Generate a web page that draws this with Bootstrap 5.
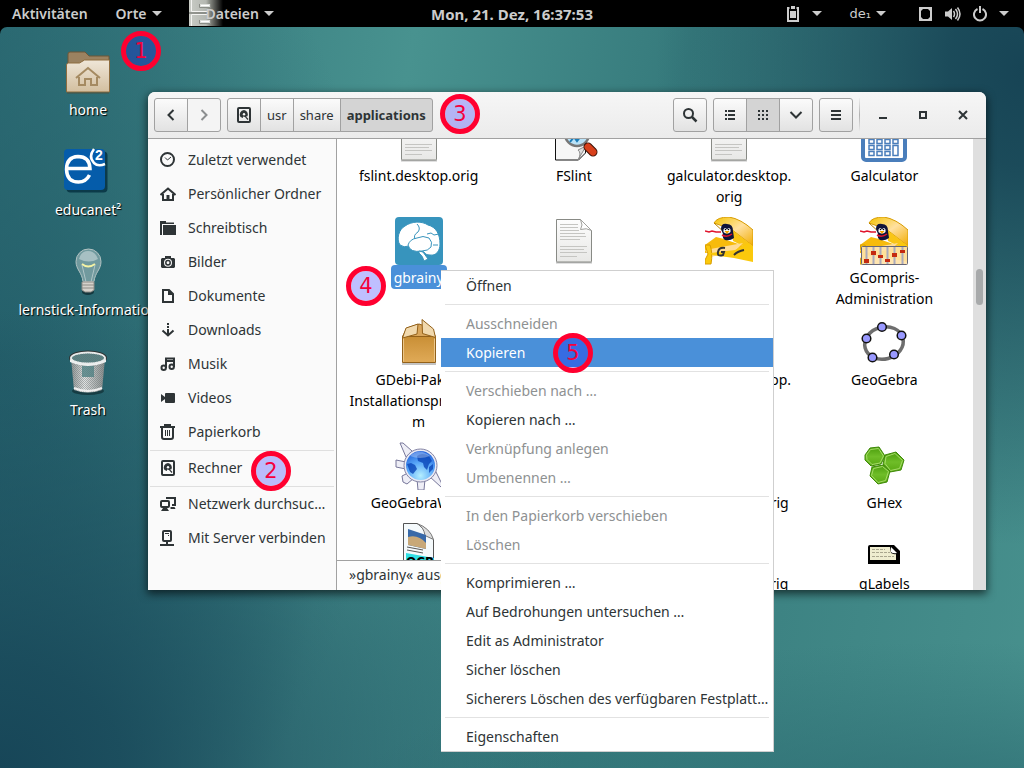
<!DOCTYPE html>
<html lang="de">
<head>
<meta charset="utf-8">
<meta name="viewport" content="width=device-width, initial-scale=1">
<title>Dateien – applications</title>
<link href="https://cdn.jsdelivr.net/npm/bootstrap@5.3.0/dist/css/bootstrap.min.css" rel="stylesheet">
<style>
  :root { --ink: #2e3436; --edge: #a1a1a1; --sel: #4a90d9; }
  body { font-family: "Noto Sans", sans-serif; font-size: 14px; line-height: 20px; color: var(--ink); background: #000; }
  a, button { color: inherit; text-decoration: none; }
  svg { display: block; flex: none; }

  /* top panel */
  .panel { height: 27px; padding: 0 15px 0 12px; color: #ccc; font-weight: 600; }
  .panel button { background: none; border: 0; padding: 0; font-weight: 600; color: inherit; }
  .panel time { font-size: 15px; font-weight: 700; }
  .tri { width: 0; height: 0; border: 5px solid transparent; border-top-color: currentColor; border-bottom: 0; }
  .with-tri { display: flex; align-items: center; gap: 5px; }
  .places { margin-left: 28px; }
  .app-btn { position: relative; margin-left: 44px; }
  .cabinet { position: absolute; left: -17px; top: -4px; }
  .app-btn span { position: relative; }
  .tray { gap: 28px; }
  .tray .with-tri { gap: 12px; }
  .tray .keymap { gap: 5px; margin-right: 4px; }
  .keymap span { font-family: "DejaVu Sans", sans-serif; font-size: 13px; font-weight: 400; }

  /* desktop */
  .desk {
    border-radius: 7px 7px 0 0;
    background:
      radial-gradient(ellipse 36% 64% at 100% 6%, #174455 0, rgba(23,68,85,.9) 20%, rgba(23,68,85,0) 100%),
      radial-gradient(ellipse 55% 62% at 0 100%, #174658 0, rgba(23,70,88,.85) 22%, rgba(23,70,88,0) 100%),
      radial-gradient(ellipse 38% 75% at 0 45%, rgba(34,92,104,.85) 0, rgba(34,92,104,0) 100%),
      radial-gradient(ellipse 60% 25% at 92% 108%, rgba(44,108,114,.9) 0, rgba(44,108,114,0) 100%),
      linear-gradient(100deg, #2f7077 0, #48928f 36%, #367a7c 60%, #47908d 100%);
  }
  .shortcuts { width: 176px; padding-top: 21px; color: #fff; text-shadow: 1px 1px 1px #000; }
  .shortcuts a { height: 100px; gap: 4px; white-space: nowrap; }

  /* file manager window */
  .win { position: absolute; left: 148px; right: 38px; top: 65px; bottom: 178px; border-radius: 7px 7px 0 0;
         box-shadow: 0 3px 9px 1px rgba(0,0,0,.6); background: #fff; }
  .bar { height: 47px; padding: 0 3px 0 6px; background: linear-gradient(#f6f6f6, #ebebeb); border-bottom: 1px solid var(--edge); border-radius: 7px 7px 0 0; }
  .bar-set { gap: 6px; }
  .bar .btn { height: 34px; padding: 0; font-size: 13px; line-height: 20px; color: var(--ink); border: 1px solid var(--edge); border-radius: 3px;
         background: linear-gradient(#fbfbfb, #e2e2e2); display: flex; align-items: center; justify-content: center; flex: none; }
  .bar .btn.sq { width: 34px; }
  .bar .btn.txt { padding: 0 6px; }
  .bar .btn.on { background: #d4d4d4; }
  .bar .btn.off { color: #8b8e8f; background: #f4f4f4; }
  .bar .btn.plain { background: none; border: 0; width: 40px; }
  .bar .divider { width: 1px; height: 34px; margin-right: -3px; background: linear-gradient(#eee, #b0b0b0, #eee); }
  .side { width: 189px; padding-top: 4px; background: #fafafa; border-right: 1px solid var(--edge); flex: none; }
  .side a { height: 34px; padding-left: 12px; gap: 12px; white-space: nowrap; }
  .side hr, .menu-box hr { margin: 0; border: 0; opacity: 1; }
  .side hr { height: 2px; margin: 0 2px; background: linear-gradient(transparent 50%, #dfdfdf 50%); }
  .files { display: grid; grid-template-columns: repeat(4, 1fr); margin-top: -24px; padding: 0 11px 0 4px; line-height: 21px; color: #000; }
  .files a { display: flex; flex-direction: column; align-items: center; gap: 2px; padding-bottom: 10px; text-align: center; white-space: nowrap; }
  .files a.picked span { margin: -2px 0 0; padding: 2px 3px 1px; border-radius: 4px; background: var(--sel); color: #fff; }
  .trough { width: 13px; background: #dfdfdf; padding-top: 130px; flex: none; }
  .thumb { width: 7px; height: 36px; margin-left: 3px; border-radius: 4px; background: #a8aaab; }
  .note { position: absolute; left: 0; bottom: 0; width: 260px; height: 30px; padding: 0 0 2px 12px; background: #fdfdfd; border: 1px solid var(--edge); border-width: 1px 1px 0 0; }

  /* context menu */
  .menu-box { position: absolute; left: 441px; top: 243px; width: 333px; background: #fff; border: 1px solid #cfcfcf; border-width: 1px 1px 1px 0; z-index: 5; }
  .menu-box button { display: block; width: 100%; height: 29px; padding: 0 0 0 25px; border: 0; background: none; text-align: left; white-space: nowrap; line-height: 20px; }
  .menu-box button:disabled { color: #8e9192; }
  .menu-box button.hot { background: var(--sel); color: #fff; }
  .menu-box hr { height: 9px; margin: 0 4px; background: linear-gradient(#e2e2e2, #e2e2e2) 0 4px / 100% 1px no-repeat; }

  /* numbered step markers */
  .step { position: absolute; z-index: 6; width: 40px; height: 40px; border: 5px solid #ff0030; border-radius: 50%; background: rgba(0,0,255,.25);
          background-clip: padding-box; color: #f5003c; font: 21px/30px "DejaVu Sans", sans-serif; text-align: center; }
  .s1 { left: 121px; top: 4px; } .s2 { left: 251px; top: 424px; } .s3 { left: 440px; top: 67px; }
  .s4 { left: 346px; top: 239px; } .s5 { left: 553px; top: 306px; }
</style>
</head>
<body class="vh-100 d-flex flex-column overflow-hidden">

<svg width="0" height="0" class="position-absolute" aria-hidden="true">
  <defs>
    <linearGradient id="paper" x2="0" y2="1"><stop stop-color="#fdfdfd"/><stop offset="1" stop-color="#e8e8e6"/></linearGradient>
    <linearGradient id="tan" x2="0" y2="1"><stop stop-color="#efe6d8"/><stop offset="1" stop-color="#d3bf9f"/></linearGradient>
    <linearGradient id="boxg" x2="0" y2="1"><stop stop-color="#c98f36"/><stop offset="1" stop-color="#e0aa57"/></linearGradient>
    <linearGradient id="metal" x2="1" y2="0"><stop stop-color="#8e9494"/><stop offset=".4" stop-color="#e2e4e4"/><stop offset="1" stop-color="#858b8b"/></linearGradient>
    <linearGradient id="wing" x2="1" y2="1"><stop stop-color="#f5c400"/><stop offset=".5" stop-color="#ffe0a0"/><stop offset="1" stop-color="#f2ac00"/></linearGradient>
    <linearGradient id="fade"><stop stop-color="#c9ccc6"/><stop offset=".5" stop-color="#b4b7b1"/><stop offset=".6" stop-color="#8c8f88"/><stop offset="1" stop-color="#000"/></linearGradient>
    <radialGradient id="globe" cx=".5" cy=".85" r=".9"><stop stop-color="#b5efff"/><stop offset=".5" stop-color="#5aa8f8"/><stop offset="1" stop-color="#1a5ad8"/></radialGradient>
    <linearGradient id="hexg" x2="0" y2="1"><stop stop-color="#4a9d0c"/><stop offset=".5" stop-color="#6fbd28"/><stop offset="1" stop-color="#58a812"/></linearGradient>
    <pattern id="mesh" width="2" height="2" patternUnits="userSpaceOnUse"><path d="M0 0h1v1H0zM1 1h1v1H1z" fill="#676f6f"/></pattern>
    <symbol id="doc" viewBox="0 0 48 48">
      <path d="M6 45.500h36" stroke="#999" stroke-width="2" opacity=".6"/>
      <path d="M6.500 2.500h24l11 11v30.500a1 1 0 0 1-1 1h-33a1 1 0 0 1-1-1z" fill="url(#paper)" stroke="#888a85"/>
      <path d="M30.500 2.500q3 6 0 10 6-2 11 1z" fill="#fff" stroke="#a0a09c"/>
      <path d="M10 7.500h18M10 10.500h18M10 13.500h19M10 16.500h25M10 19.500h26M10 22.500h20M10 29.500h27M10 32.500h24M10 35.500h27M10 39.500h17" stroke="#c5c5c2"/>
    </symbol>
    <symbol id="disk" viewBox="0 0 16 16">
      <rect x="2" y="1" width="12" height="14" rx="1" fill="none" stroke="currentColor" stroke-width="2"/>
      <path d="M8 3a4.500 4.500 0 0 0-3.500 7L7 11V9.500l2 .5 2.500 3 1-1L10 9.500l1.500-.3A4.500 4.500 0 0 0 8 3z" fill="currentColor"/>
      <circle cx="8" cy="7.300" r="1.200" fill="#fafafa"/>
    </symbol>
    <symbol id="plane" viewBox="0 0 48 48">
      <path d="M9 6Q12 0 24 0Q36 2 48 13v16L26 12z" fill="url(#wing)" stroke="#d89c00"/>
      <path d="M26 12l22 17v5L28 24z" fill="#f9c515"/>
      <path d="M9 6l11 10" stroke="#b98400"/>
      <path d="M11 20l8 2 20 7-10 5-29 2V28z" fill="#f7bb0c"/>
      <path d="M0 33l38-7-8 8-24 6z" fill="#ffdc96"/>
      <path d="M0 28h5q3 8 1 19H0v-4l3-6z" fill="#fbc90c" stroke="#d89c00"/>
      <path d="M6 36l24-3 13-7 5 4v15l-19-4-22-3z" fill="#fbc90c"/>
      <path d="M16 12q0-6 6-5 6 0 6 7l1 7q-4 3-9 2-3-2-2-6z" fill="#10143a"/>
      <path d="M18.500 12.500q1.500-3 3.500 0 2-3 3.500 0v2.500q-3.500 3-7 0z" fill="#fff"/><path d="M19.500 14h5l-2.500 3z" fill="#f6a400"/>
      <circle cx="20.500" cy="12.500" r=".8"/><circle cx="23.500" cy="12.500" r=".8"/>
      <path d="M0 14l4 1 3-1 4 1 5 0M17 18q5 3 10-1" fill="none" stroke="#e0142c" stroke-width="1.500"/>
    </symbol>
  </defs>
</svg>

<header class="panel d-flex align-items-center justify-content-between flex-shrink-0 position-relative">
  <div class="d-flex">
    <button>Aktivitäten</button>
    <button class="with-tri places">Orte <i class="tri"></i></button>
    <button class="with-tri app-btn">
      <svg class="cabinet" width="34" height="27" viewBox="0 0 34 27">
        <path d="M0 0h34v26H0z" fill="url(#fade)"/><path d="M2.500 0v11.500h16M2.500 26V14.500h16" fill="none" stroke="#f4f4f2"/><path d="M0 13h19" stroke="#60635d"/><path d="M10.500 4v3.500h11V4M10.500 20v3.500h11V20" fill="#dcdedb" stroke="#8a8d87"/><path d="M12 5.500h8M12 21.500h8" stroke="#fff"/></svg>
      <span>Dateien</span> <i class="tri"></i></button>
  </div>
  <time class="position-absolute start-50 translate-middle-x">Mon, 21. Dez, 16:37:53</time>
  <div class="tray d-flex align-items-center">
    <button class="with-tri" aria-label="Zwischenablage"><svg width="14" height="16" viewBox="0 0 14 16"><path d="M5 0h4v3H5z" fill="currentColor"/><path d="M3.500 2H2v13h10V2h-1.500" fill="none" stroke="currentColor" stroke-width="2"/><path d="M4 5h6v7H4z" fill="currentColor"/></svg><i class="tri"></i></button>
    <button class="with-tri keymap"><span>de₁</span><i class="tri"></i></button>
    <button class="with-tri" aria-label="System">
      <svg width="14" height="14" viewBox="0 0 14 14"><rect x="2" y="1" width="11" height="12" fill="none" stroke="currentColor" stroke-width="2"/><path d="M3 2h2L3 4zM12 2h-2l2 2zM3 12v-2l2 2zM12 12v-2l-2 2z" fill="currentColor"/></svg>
      <svg width="17" height="16" viewBox="0 0 17 16"><path d="M1 5.500h3L8 2v12l-4-3.500H1z" fill="currentColor"/><path d="M9.500 5q2 3 0 6M11.500 3q4 5 0 10M13.500 1.500q5 6.500 0 13" fill="none" stroke="currentColor" stroke-width="1.500"/></svg>
      <svg width="14" height="16" viewBox="0 0 14 16"><path d="M4.500 3A6 6 0 1 0 9.500 3M7 0v7" fill="none" stroke="currentColor" stroke-width="2"/></svg>
      <i class="tri"></i></button>
  </div>
</header>

<main class="desk flex-grow-1 position-relative">
  <nav class="shortcuts d-flex flex-column" aria-label="Schreibtisch">
    <a href="#" class="d-flex flex-column align-items-center">
      <svg width="48" height="48" viewBox="0 0 48 48"><path d="M4 43V6q0-2 2-2h15l4 4h20v8H4z" fill="#9b8260" stroke="#6f5636"/><path d="M2.500 44V17q0-2 2-2h11l5-3h25v32z" fill="url(#tan)" stroke="#8d6c3f"/><path d="M3 45h42" stroke="#5b4426" opacity=".6"/><path d="M12 30l12-10 12 10M15 29v8h6v-6h6v6h6v-8" fill="none" stroke="#a58a61" stroke-width="2"/></svg>home</a>
    <a href="#" class="d-flex flex-column align-items-center">
      <svg width="48" height="48" viewBox="0 0 48 48"><rect x="2.500" y="3.500" width="41" height="41" rx="4" fill="#022b3c" opacity=".75"/><rect x="0" y="1" width="41" height="41" rx="4" fill="#055caa"/><path d="M2 20.500h24Q25.500 8.500 14 8.500Q2.500 9 2.500 21.500Q3 34 14.500 34Q22 34 25.500 27" fill="none" stroke="#fff" stroke-width="3.500"/><path d="M30 1q-6 8 0 14 4 4 11 1" fill="none" stroke="#fff" stroke-width="2.500"/><text x="31" y="12" font-family="Liberation Sans, sans-serif" font-weight="700" font-size="14" fill="#fff" style="text-shadow:none">2</text></svg>educanet²</a>
    <a href="#" class="d-flex flex-column align-items-center">
      <svg width="48" height="48" viewBox="0 0 48 48"><ellipse cx="24" cy="44" rx="6" ry="3" fill="#0b2429" opacity=".7"/><path d="M12 13.500a12.500 12.500 0 0 1 25 0c0 8-6 11-7 20H19c-1-9-7-12-7-20z" fill="#b8cccc" fill-opacity=".5" stroke="#b4c4c4"/><path d="M15 11q2-8 9-8t10 8q-9 5-19 0z" fill="#e9f0f0" opacity=".45"/><path d="M18 16q6 5 13 0" fill="none" stroke="#f4f3a4" stroke-width="2"/><path d="M18 17l4 17M31 17l-4 17" stroke="#d8e2e2" opacity=".6"/><path d="M18 34h12v8l-3 2h-6l-3-2z" fill="#d5d2cb" stroke="#8e8c86"/><path d="M18 37h12M18 40h12" stroke="#8e8c86"/></svg>lernstick-Information</a>
    <a href="#" class="d-flex flex-column align-items-center">
      <svg width="48" height="48" viewBox="0 0 48 48"><ellipse cx="24" cy="43" rx="16" ry="4" fill="#0c2529" opacity=".6"/><path d="M7 10h34l-3 32q-14 5-28 0z" fill="url(#metal)"/><path d="M7 10h34l-3 32q-14 5-28 0z" fill="url(#mesh)" opacity=".45"/><path d="M18 17h12v12H18z" fill="#4f7f82" opacity=".8"/><path d="M10 40q14 6 28 0" fill="none" stroke="#eee" stroke-width="2"/><ellipse cx="24" cy="10" rx="17.500" ry="6" fill="#3b7073" stroke="#303535" stroke-width="3"/><ellipse cx="24" cy="10" rx="17" ry="5.500" fill="#568688" stroke="#e8eaea" stroke-width="2"/><ellipse cx="24" cy="10" rx="16" ry="4.500" fill="url(#mesh)" opacity=".6"/><path d="M6 11q18 10 36 0v3q-18 8-36 0z" fill="#eceeee"/></svg>Trash</a>
  </nav>

  <section class="win d-flex flex-column" aria-label="applications">
    <div class="bar d-flex align-items-center justify-content-between flex-shrink-0">
      <div class="bar-set d-flex">
        <div class="btn-group">
          <button class="btn sq" aria-label="Zurück"><svg width="16" height="16" viewBox="0 0 16 16"><path d="M10.500 3L5.500 8l5 5" fill="none" stroke="currentColor" stroke-width="2"/></svg></button>
          <button class="btn sq off" aria-label="Vorwärts"><svg width="16" height="16" viewBox="0 0 16 16"><path d="M5.500 3l5 5-5 5" fill="none" stroke="currentColor" stroke-width="2"/></svg></button>
        </div>
        <div class="btn-group">
          <button class="btn sq" aria-label="Rechner"><svg width="16" height="16"><use href="#disk"/></svg></button>
          <button class="btn txt">usr</button>
          <button class="btn txt">share</button>
          <button class="btn txt on fw-bold">applications</button>
        </div>
      </div>
      <div class="bar-set d-flex">
        <button class="btn sq" aria-label="Suchen"><svg width="16" height="16" viewBox="0 0 16 16"><circle cx="6.500" cy="6.500" r="4.500" fill="none" stroke="currentColor" stroke-width="2"/><path d="M10 10l4.500 4.500" stroke="currentColor" stroke-width="2.500"/></svg></button>
        <div class="btn-group">
          <button class="btn sq" aria-label="Liste"><svg width="16" height="16" viewBox="0 0 16 16"><path d="M3 4h2M3 8h2M3 12h2M6 4h7M6 8h7M6 12h7" stroke="currentColor" stroke-width="2"/></svg></button>
          <button class="btn sq on" aria-label="Symbole"><svg width="16" height="16" viewBox="0 0 16 16"><path d="M3 4h10M3 8h10M3 12h10" stroke="currentColor" stroke-width="2" stroke-dasharray="2 2"/></svg></button>
          <button class="btn sq" aria-label="Ansicht"><svg width="16" height="16" viewBox="0 0 16 16"><path d="M2.500 5L8 10.500 13.500 5" fill="none" stroke="currentColor" stroke-width="2"/></svg></button>
        </div>
        <button class="btn sq" aria-label="Menü"><svg width="16" height="16" viewBox="0 0 16 16"><path d="M3 4h10M3 8h10M3 12h10" stroke="currentColor" stroke-width="2"/></svg></button>
        <div class="divider"></div>
        <div class="d-flex">
          <button class="btn plain" aria-label="Minimieren"><svg width="16" height="16" viewBox="0 0 16 16"><path d="M4 11h8" stroke="currentColor" stroke-width="2"/></svg></button>
          <button class="btn plain" aria-label="Maximieren"><svg width="16" height="16" viewBox="0 0 16 16"><path d="M5 5h6v6H5z" fill="none" stroke="currentColor" stroke-width="2"/></svg></button>
          <button class="btn plain" aria-label="Schließen"><svg width="16" height="16" viewBox="0 0 16 16"><path d="M4 4l8 8M12 4l-8 8" stroke="currentColor" stroke-width="2"/></svg></button>
        </div>
      </div>
    </div>

    <div class="d-flex flex-grow-1 overflow-hidden">
      <nav class="side" aria-label="Orte">
        <a href="#" class="d-flex align-items-center"><svg width="16" height="16" viewBox="0 0 16 16"><circle cx="7.500" cy="7.500" r="6.500" fill="none" stroke="currentColor" stroke-width="2"/><path d="M5 5.500l2.500 2.500L11 5" fill="none" stroke="currentColor"/></svg>Zuletzt verwendet</a>
        <a href="#" class="d-flex align-items-center"><svg width="16" height="16" viewBox="0 0 16 16"><path d="M.5 9L8 2.500 15.500 9M3 8v6h10V8" fill="none" stroke="currentColor" stroke-width="2"/><path d="M6.500 9h3v5h-3z" fill="currentColor"/></svg>Persönlicher Ordner</a>
        <a href="#" class="d-flex align-items-center"><svg width="16" height="16" viewBox="0 0 16 16"><path d="M0 1h6v1.500h8V4H2v11H0z" fill="currentColor"/><path d="M3 5h13v10H3z" fill="currentColor"/></svg>Schreibtisch</a>
        <a href="#" class="d-flex align-items-center"><svg width="16" height="16" viewBox="0 0 16 16"><path fill-rule="evenodd" d="M5 2h6v2h3l1 1v8l-1 1H2l-1-1V5l1-1h3zM8 4.800a4 4 0 1 0 0 8 4 4 0 0 0 0-8z" fill="currentColor"/><circle cx="8" cy="8.800" r="2.200" fill="none" stroke="currentColor" stroke-width="1.500"/></svg>Bilder</a>
        <a href="#" class="d-flex align-items-center"><svg width="16" height="16" viewBox="0 0 16 16"><path d="M3 2h6l4 4v8H3z" fill="none" stroke="currentColor" stroke-width="2"/><path d="M9 2l4 4v1H8V2z" fill="currentColor"/></svg>Dokumente</a>
        <a href="#" class="d-flex align-items-center"><svg width="16" height="16" viewBox="0 0 16 16"><path d="M7 1h2v2H7zM7 4h2v2H7zM7 7h2v5H7z" fill="currentColor"/><path d="M2.500 8.500L8 13.500l5.500-5" fill="none" stroke="currentColor" stroke-width="2"/></svg>Downloads</a>
        <a href="#" class="d-flex align-items-center"><svg width="16" height="16" viewBox="0 0 16 16"><path d="M6 12V2.500h8V11M6 5h8" fill="none" stroke="currentColor" stroke-width="2"/><circle cx="3.700" cy="11.700" r="2.200" fill="none" stroke="currentColor" stroke-width="2"/><circle cx="11.700" cy="10.700" r="2.200" fill="none" stroke="currentColor" stroke-width="2"/></svg>Musik</a>
        <a href="#" class="d-flex align-items-center"><svg width="16" height="16" viewBox="0 0 16 16"><path d="M1 4l4 3v2l-4 3zM6 3h8q1 0 1 1v8q0 1-1 1H6q-1 0-1-1V4q0-1 1-1z" fill="currentColor"/></svg>Videos</a>
        <a href="#" class="d-flex align-items-center"><svg width="16" height="16" viewBox="0 0 16 16"><path d="M0 3h15M4 1h7M2 4v9q0 2 2 2h7q2 0 2-2V4" fill="none" stroke="currentColor" stroke-width="2"/><path d="M5.500 6v6M7.500 6v6M9.500 6v6" stroke="currentColor"/></svg>Papierkorb</a>
        <hr>
        <a href="#" class="d-flex align-items-center"><svg width="16" height="16"><use href="#disk"/></svg>Rechner</a>
        <hr>
        <a href="#" class="d-flex align-items-center"><svg width="16" height="16" viewBox="0 0 16 16"><path d="M7 3V2h8v7h-3" fill="none" stroke="currentColor" stroke-width="2"/><rect x="1" y="5" width="8" height="6" rx="1" fill="none" stroke="currentColor" stroke-width="2"/><path d="M3 12h4l2 3H1zM10.500 11h4l1 2h-5z" fill="currentColor"/></svg>Netzwerk durchsuc…</a>
        <a href="#" class="d-flex align-items-center"><svg width="16" height="16" viewBox="0 0 16 16"><rect x="3" y="1" width="8" height="10" rx="1" fill="none" stroke="currentColor" stroke-width="2"/><path d="M7 11v3M0 15h14" stroke="currentColor" stroke-width="2"/><path d="M5 3.500h4M8 5.500h1" stroke="currentColor"/></svg>Mit Server verbinden</a>
      </nav>

      <div class="flex-grow-1 position-relative overflow-hidden">
        <div class="files">
          <a href="#"><svg width="48" height="48"><use href="#doc"/></svg><span>fslint.desktop.orig</span></a>
          <a href="#"><svg width="48" height="48" viewBox="0 0 48 48"><path d="M5.500 1v44h23l7-7V1z" fill="#f6f6f6" stroke="#111"/><path d="M28 45q4-7 0-10l8-4z" fill="#ddd" stroke="#888"/><circle cx="27" cy="19" r="12" fill="#b9e2f8" stroke="#777" stroke-width="2.500"/><path d="M20 27l4-5 3 4 4-5" stroke="#1b7cb8" stroke-width="2" fill="none"/><path d="M35 29l3 3" stroke="#333" stroke-width="4"/><path d="M38 32l5 5" stroke="#3a1107" stroke-width="9" stroke-linecap="round"/><path d="M38 32l5 5" stroke="#d8401b" stroke-width="7" stroke-linecap="round"/></svg><span>FSlint</span></a>
          <a href="#"><svg width="48" height="48"><use href="#doc"/></svg><span>galculator.desktop.<br>orig</span></a>
          <a href="#"><svg width="48" height="48" viewBox="0 0 48 48"><rect x="3" y="2" width="42" height="43" rx="3" fill="#fff" stroke="#4a7ebb" stroke-width="4"/><path d="M9 17h5v5H9zM17 17h5v5h-5zM25 17h5v5h-5zM33 17h5v5h-5zM9 24.500h5v4H9zM17 24.500h5v4h-5zM25 24.500h5v4h-5zM33 24.500h5v4h-5zM9 30.500h5v4H9zM17 30.500h5v4h-5zM25 30.500h5v4h-5zM33 30.500h5v10h-5zM9 36.500h5v4H9zM17 36.500h5v4h-5zM25 36.500h5v4h-5z" fill="none" stroke="#4a7ebb" stroke-width="1.500"/></svg><span>Galculator</span></a>

          <a href="#" class="picked"><svg width="48" height="48" viewBox="0 0 48 48"><rect width="48" height="48" rx="4" fill="#3794bd"/><g fill="#fff" stroke="#3794bd"><path d="M5 28C1 22 4 12 10 9c7-5 17-5 23-1 8 2 12 9 12 19 0 7-4 12-10 11-3 0-5-1-6-3L14 29q-5 2-9-1z"/><path d="M13 28q2-6 9-7 6-3 12 0 4 4 2 9-3 4-9 4-12 2-14-6z"/><path d="M20 22q-2-4 3-7 3-4-1-8M32 17l4-1 3 2 5-1M38 28h5" fill="none"/><path d="M24 34l4 1 5 7-4 2q-1-5-5-8z"/></g></svg><span>gbrainy</span></a>
          <a href="#"><svg width="48" height="48"><use href="#doc"/></svg><span>gbrainy.desktop.orig</span></a>
          <a href="#"><svg width="48" height="48" viewBox="0 0 48 48"><use href="#plane"/><path d="M20 31q-6-1-7 4t5 3l1-3h-3M29 38q4-4 10-5" fill="none" stroke="#333" stroke-width="2"/></svg><span>GCompris</span></a>
          <a href="#"><svg width="48" height="48" viewBox="0 0 48 48"><use href="#plane"/><rect x="1.500" y="29.500" width="46" height="18" rx="1" fill="#ffe2a8" fill-opacity=".9" stroke="#667"/><path d="M6.500 30v17M13.500 30v17M20.500 30v17M27.500 30v17M34.500 30v17M42.500 30v17" stroke="#aab" stroke-width="2"/><path d="M4 42h5v4H4zM11 34h5v4h-5zM18 38h5v3h-5zM25 42h5v3h-5zM32 36h5v4h-5zM40 33h5v3h-5z" fill="#c42a10"/></svg><span>GCompris-<br>Administration</span></a>

          <a href="#"><svg width="48" height="48" viewBox="0 0 48 48"><path d="M7 45h34" stroke="#888" stroke-width="2" opacity=".5"/><path d="M7.500 17.500L12 9l12-4 12 4 4.500 8.500z" fill="#d9a65c" stroke="#93611a"/><path d="M7.500 17.500h33v26h-33z" fill="url(#boxg)" stroke="#93611a"/><path d="M7.500 19L11 9l12-4-1 10zM27 .500L38.500 10l2 8.500-13-4z" fill="#f1d9ae" stroke="#93611a"/><path d="M8.500 42.500v-23M39.500 42.500v-23" fill="none" stroke="#ecc78a"/></svg><span>GDebi-Paket-<br>Installationsprogram<br>m</span></a>
          <a href="#"><svg width="48" height="48"><use href="#doc"/></svg><span>gdebi.desktop.orig</span></a>
          <a href="#"><svg width="48" height="48"><use href="#doc"/></svg><span>geogebra.desktop.<br>orig</span></a>
          <a href="#"><svg width="48" height="48" viewBox="0 0 48 48"><ellipse cx="24" cy="24" rx="19.500" ry="16" transform="rotate(-15 24 24)" fill="none" stroke="#6e6e6e" stroke-width="3.500"/><g fill="#9999ff" stroke="#111" stroke-width="1.500"><circle cx="22" cy="8" r="4.300"/><circle cx="41.500" cy="16.500" r="4.300"/><circle cx="34" cy="35.500" r="4.300"/><circle cx="12.500" cy="38.500" r="4.300"/><circle cx="6.500" cy="19.500" r="4.300"/></g></svg><span>GeoGebra</span></a>

          <a href="#"><svg width="48" height="48" viewBox="0 0 48 48"><g fill="#eeeef6" stroke="#77779a"><path d="M5 1l3 0 9 8-6 6zM1 18l10 2v7L1 25zM7 34l8-4 4 6-7 6-4-2zM22 37h8l-1 11h-6zM34 34l6-6 7 14-1 3z"/></g><circle cx="25.500" cy="23.500" r="16.500" fill="#eaeaf4" stroke="#8585a5"/><circle cx="25.500" cy="23.500" r="14.500" fill="url(#globe)"/><path d="M12 22l4-1 4 2 2 4-4 5-3-2zM22 14q5-4 12 0l3 5-3 3-2 6-3-3-1-4-5-2zM34 25l4-3v5l-4 4z" fill="#0a45b8" opacity=".8"/><path d="M15 14q9-9 20 0-10 4-20 0z" fill="#fff" opacity=".3"/></svg><span>GeoGebraWeb</span></a>
          <a href="#"><svg width="48" height="48"><use href="#doc"/></svg><span>gfax.desktop.orig</span></a>
          <a href="#"><svg width="48" height="48"><use href="#doc"/></svg><span>ghex.desktop.orig</span></a>
          <a href="#"><svg width="48" height="48" viewBox="0 0 48 48"><g fill="url(#hexg)" stroke="#3f8a08"><path d="M5 13l5-7 9-1 6 9-4 8-10 2-6-6z"/><path d="M25 13l11-3 8 8-3 10-11 2-7-8z"/><path d="M12 25l11-2 7 6-3 11-9 2-8-8z"/></g><g fill="none" stroke="#a6dc68"><path d="M6.500 13l4-5.500 8-1 5 7.500-3.500 7-8 1.500-5-5z"/><path d="M26 14.500l9-3 7.500 7-3 8-9 2-5.500-7z"/><path d="M13.500 26.500l9-2 6 5-3 9-7.500 2-6.500-7z"/></g></svg><span>GHex</span></a>

          <a href="#" aria-label="gImageReader"><svg width="48" height="48" viewBox="0 0 48 48"><path d="M8.500.500h14l16 16V48h-30z" fill="#f5fafc" stroke="#555"/><path d="M22 .500q7 4 8 12l8.500 4Q35 5 22 .500z" fill="#ddd" stroke="#777"/><path d="M13 6l18 6v14l-18-4z" fill="#3869a8"/><path d="M13 14q10-3 18 6v6l-18-4z" fill="#c8a878"/><path d="M12 24l16 3M12 27l16 3" stroke="#555"/><path d="M11 30l28 5v13H11z" fill="#30dfe4"/><text x="11" y="43" font-family="DejaVu Sans, sans-serif" font-weight="700" font-size="12">OCR</text></svg></a>
          <a href="#" aria-label="gimp.desktop.orig"><svg width="48" height="48"><use href="#doc"/></svg></a>
          <a href="#"><svg width="48" height="48"><use href="#doc"/></svg><span>gksu.desktop.orig</span></a>
          <a href="#"><svg width="48" height="48" viewBox="0 0 48 48"><path d="M8 24q0-2 2-2h24l6 6v13H8z"/><path d="M10 24h20l1 6q4 2 5 1v6H10z" fill="#efedcf"/><path d="M31 24l6 6q-4 1-6-1z" fill="#fff"/><path d="M12 26.500h13M12 29.500h18M12 33.500h22" stroke="#aaa78e" stroke-dasharray="3 1"/></svg><span>gLabels</span></a>
        </div>
        <div class="note d-flex align-items-center">»gbrainy« ausgewählt (1,0 kB)</div>
      </div>
      <div class="trough"><div class="thumb"></div></div>
    </div>
  </section>

  <div class="menu-box" role="menu">
    <button role="menuitem">Öffnen</button>
    <hr>
    <button role="menuitem" disabled>Ausschneiden</button>
    <button role="menuitem" class="hot">Kopieren</button>
    <hr>
    <button role="menuitem" disabled>Verschieben nach …</button>
    <button role="menuitem">Kopieren nach …</button>
    <button role="menuitem" disabled>Verknüpfung anlegen</button>
    <button role="menuitem" disabled>Umbenennen …</button>
    <hr>
    <button role="menuitem" disabled>In den Papierkorb verschieben</button>
    <button role="menuitem" disabled>Löschen</button>
    <hr>
    <button role="menuitem">Komprimieren …</button>
    <button role="menuitem">Auf Bedrohungen untersuchen …</button>
    <button role="menuitem">Edit as Administrator</button>
    <button role="menuitem">Sicher löschen</button>
    <button role="menuitem">Sicherers Löschen des verfügbaren Festplatt…</button>
    <hr>
    <button role="menuitem">Eigenschaften</button>
  </div>

  <div class="step s1">1</div>
  <div class="step s2">2</div>
  <div class="step s3">3</div>
  <div class="step s4">4</div>
  <div class="step s5">5</div>
</main>

<script src="https://cdn.jsdelivr.net/npm/bootstrap@5.3.0/dist/js/bootstrap.bundle.min.js"></script>
</body>
</html>
